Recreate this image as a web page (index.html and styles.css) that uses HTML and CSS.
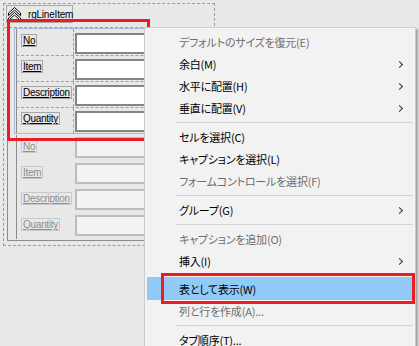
FILE: index.html
```html
<!DOCTYPE html>
<html lang="ja">
<head>
  <meta charset="UTF-8" />
  <meta name="viewport" content="width=device-width,initial-scale=1.0" />
  <title>フォームデザイナー</title>
  <link rel="stylesheet" href="styles.css">
</head>
<body>
  <div class="canvas">

    <div class="frame">
      <div class="frame-head">
        <div class="caption-tab">
          <svg class="collapse-icon" width="13" height="14" viewBox="0 0 13 14">
            <polygon points="0.5,6 6.5,0.5 12.5,6 12.5,8.5 6.5,3 0.5,8.5" fill="#fff" stroke="#000" stroke-width="1"/>
            <polygon points="0.5,11 6.5,5.5 12.5,11 12.5,13.5 6.5,8 0.5,13.5" fill="#fff" stroke="#000" stroke-width="1"/>
          </svg>
          <span class="caption-link">rgLineItem</span>
        </div>
      </div>

      <div class="frame-body">
        <div class="rows rows-selected">
          <div class="row">
            <div class="cell-label"><span class="label">No</span></div>
            <div class="cell-field"><div class="field"></div></div>
          </div>
          <div class="row">
            <div class="cell-label"><span class="label">Item</span></div>
            <div class="cell-field"><div class="field"></div></div>
          </div>
          <div class="row">
            <div class="cell-label"><span class="label">Description</span></div>
            <div class="cell-field"><div class="field"></div></div>
          </div>
          <div class="row">
            <div class="cell-label"><span class="label">Quantity</span></div>
            <div class="cell-field"><div class="field"></div></div>
          </div>
        </div>

        <div class="rows rows-ghost">
          <div class="row">
            <div class="cell-label"><span class="label">No</span></div>
            <div class="cell-field"><div class="field"></div></div>
          </div>
          <div class="row">
            <div class="cell-label"><span class="label">Item</span></div>
            <div class="cell-field"><div class="field"></div></div>
          </div>
          <div class="row">
            <div class="cell-label"><span class="label">Description</span></div>
            <div class="cell-field"><div class="field"></div></div>
          </div>
          <div class="row">
            <div class="cell-label"><span class="label">Quantity</span></div>
            <div class="cell-field"><div class="field"></div></div>
          </div>
        </div>
      </div>
    </div>

    <!-- 注釈の赤枠 -->
    <div class="mark mark-group"></div>

    <ul class="menu">
      <li class="menu-item disabled">デフォルトのサイズを復元(E)</li>
      <li class="menu-item">余白(M)<span class="arrow"></span></li>
      <li class="menu-item">水平に配置(H)<span class="arrow"></span></li>
      <li class="menu-item">垂直に配置(V)<span class="arrow"></span></li>
      <li class="menu-sep"></li>
      <li class="menu-item">セルを選択(C)</li>
      <li class="menu-item">キャプションを選択(L)</li>
      <li class="menu-item disabled">フォームコントロールを選択(F)</li>
      <li class="menu-sep"></li>
      <li class="menu-item">グループ(G)<span class="arrow"></span></li>
      <li class="menu-sep"></li>
      <li class="menu-item disabled">キャプションを追加(O)</li>
      <li class="menu-item">挿入(I)<span class="arrow"></span></li>
      <li class="menu-item active">表として表示(W)</li>
      <li class="menu-item disabled">列と行を作成(A)...</li>
      <li class="menu-sep"></li>
      <li class="menu-item">タブ順序(T)...</li>
    </ul>

    <div class="mark mark-item"></div>
  </div>
</body>
</html>
```

FILE: styles.css
```css
body {
  margin: 0;
  background: #e8e8e8;
  font-family: 'Liberation Sans', Arial, sans-serif;
  overflow: hidden;
}

.canvas {
  position: relative;
  width: 419px;
  height: 346px;
  overflow: hidden;
}

/* グループ枠 */
.frame {
  box-sizing: border-box;
  margin: 3px 0 0 3px;
  width: 212px;
  height: 243px;
  border: 1px dashed #9c9c9c;
}

.frame-head {
  height: 22px;
  border-bottom: 1px dashed #9c9c9c;
}

.caption-tab {
  box-sizing: border-box;
  display: flex;
  align-items: center;
  margin: 1px 0 0 2px;
  width: 67px;
  height: 18px;
  padding-left: 1px;
  border: 1px solid #a8a8a8;
}

.collapse-icon {
  flex: none;
}

.caption-link {
  margin-left: 7px;
  font-size: 10px;
  letter-spacing: -0.2px;
  color: #000;
  text-decoration: underline;
}

.frame-body {
  margin-left: 3px;
  height: 212px;
  border-left: 1px solid #8c8c8c;
  border-bottom: 1px solid #8c8c8c;
}

.rows {
  margin-left: 6px;
  padding-left: 1px;
  border: 1px solid transparent;
}

.rows-selected {
  border-color: #a9bcd6;
}

.rows-ghost {
  margin-top: 1px;
  border-top: 0;
}

.row {
  display: flex;
  height: 26px;
  box-sizing: border-box;
  border-left: 1px solid #8c8c8c;
}

.rows-selected .row + .row {
  border-top: 1px dashed #a0a0a0;
}

.cell-label {
  box-sizing: border-box;
  display: flex;
  align-items: flex-start;
  width: 57px;
  padding: 5px 0 0 4px;
}

.rows-selected .cell-label {
  border-right: 1px dashed #a0a0a0;
}

.rows-selected .row + .row .cell-label {
  padding-top: 4px;
}

.label {
  display: block;
  padding: 0 1px;
  border: 1px solid #a6a6a6;
  font-size: 10px;
  line-height: 11px;
  letter-spacing: -0.3px;
  color: #000;
  text-decoration: underline;
}

.rows-ghost .label {
  color: #8e8e8e;
  border-color: #c9c9c9;
}

.cell-field {
  padding: 4px 0 0 1px;
}

.rows-selected .row + .row .cell-field {
  padding-top: 3px;
}

.field {
  box-sizing: border-box;
  width: 90px;
  height: 21px;
  background: #fff;
  border: 2px solid #858585;
}

.rows-ghost .cell-field {
  padding-top: 2px;
}

.rows-ghost .field {
  background: #f3f3f3;
  border-color: #bdbdbd;
}

/* コンテキストメニュー */
.menu {
  position: absolute;
  left: 144px;
  top: 27px;
  width: 272px;
  height: 340px;
  box-sizing: border-box;
  margin: 0;
  padding: 3px 0;
  list-style: none;
  background: #f2f2f2;
  border: 1px solid #cccccc;
  box-shadow: 2px 2px 2px rgba(0, 0, 0, 0.3);
  font-family: 'Noto Sans CJK JP', sans-serif;
  font-size: 11px;
  letter-spacing: -0.2px;
  font-feature-settings: 'palt';
  color: #000;
}

.menu-item {
  display: flex;
  justify-content: space-between;
  align-items: center;
  height: 22px;
  padding: 0 11px 0 34px;
}

.menu-item.disabled {
  color: #6d6d6d;
}

.menu-item.active {
  height: 23px;
  margin: 5px 2px 0;
  padding-left: 32px;
  background: #91c9f7;
}

.arrow {
  width: 4px;
  height: 4px;
  border-top: 1px solid #333;
  border-right: 1px solid #333;
  transform: rotate(45deg);
  margin-right: 2px;
}

.menu-sep {
  height: 1px;
  margin: 3px 2px 3px 31px;
  background: #d5d5d5;
}

/* 赤い注釈枠 */
.mark {
  position: absolute;
  box-sizing: border-box;
  border: 3px solid #ec1c24;
}

.mark-group {
  left: 7px;
  top: 19px;
  width: 143px;
  height: 122px;
}

.mark-item {
  left: 161px;
  top: 273px;
  width: 254px;
  height: 31px;
}
```
